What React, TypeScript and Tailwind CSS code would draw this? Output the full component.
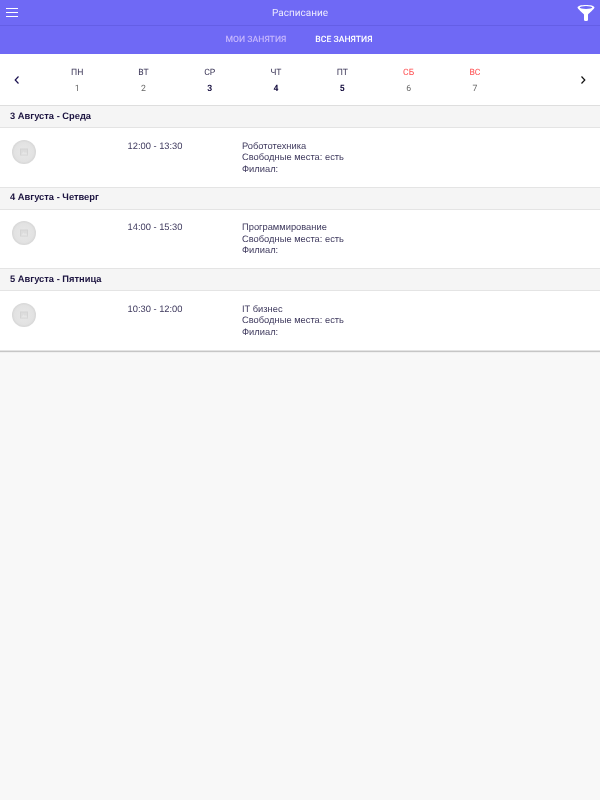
const days = [
  { name: "ПН", num: "1" },
  { name: "ВТ", num: "2" },
  { name: "СР", num: "3", active: true },
  { name: "ЧТ", num: "4", active: true },
  { name: "ПТ", num: "5", active: true },
  { name: "СБ", num: "6", weekend: true },
  { name: "ВС", num: "7", weekend: true },
];

const lessons = [
  { date: "3 Августа - Среда", time: "12:00 - 13:30", title: "Робототехника" },
  { date: "4 Августа - Четверг", time: "14:00 - 15:30", title: "Программирование" },
  { date: "5 Августа - Пятница", time: "10:30 - 12:00", title: "IT бизнес" },
];

const Avatar = () => (
  <div className="w-6 h-6 mt-[11.5px] ml-3 box-content">
    <svg width="24" height="24" viewBox="0 0 24 24">
      <defs>
        <radialGradient id="avatarFill" cx="50%" cy="50%" r="50%">
          <stop offset="0%" stopColor="#e8e8e8" />
          <stop offset="80%" stopColor="#e2e2e2" />
          <stop offset="100%" stopColor="#d6d6d6" />
        </radialGradient>
      </defs>
      <circle cx="12" cy="12" r="12" fill="url(#avatarFill)" />
      <rect x="8.5" y="9" width="7" height="6" fill="#dcdcdc" stroke="#d4d4d4" />
      <path d="M9 14.5l2.5-3 1.5 1.5 1-1 1.5 2.5z" fill="#e6e6e6" />
    </svg>
  </div>
);

const App = () => {
  return (
    <div className="min-h-[800px] flex flex-col bg-[#f8f8f8] font-['Roboto',sans-serif] [text-rendering:geometricPrecision] [will-change:transform]">
      <div className="bg-[#6f69f5]">
        <div className="h-[26px] flex items-center justify-between border-b border-[#645ee6] pl-[6px] pr-[5px]">
          <svg width="12" height="10" viewBox="0 0 12 10" className="mt-px">
            <path d="M0 .5h12M0 4.5h12M0 8.5h12" stroke="#fff" strokeWidth="1.2" />
          </svg>
          <span className="ml-[5px] mt-px text-[10px] text-[#eceafe]">Расписание</span>
          <svg width="18" height="18" viewBox="0 0 18 18">
            <path d="M.5 3.5C.5.2 17.5.2 17.5 3.5c0 1.2-5.2 5.500-6.500 7v5.500c0 1.300-4 1.300-4 0v-5.500c-1.300-1.500-6.500-5.800-6.500-7z" fill="#fff" />
            <ellipse cx="9" cy="3.5" rx="6.3" ry="1.5" fill="#6f69f5" />
          </svg>
        </div>
        <div className="h-7 flex items-center justify-center gap-[29px] pr-[2px] text-[8.67px] font-medium">
          <span className="text-[#c4b5fd]">МОИ ЗАНЯТИЯ</span>
          <span className="text-white">ВСЕ ЗАНЯТИЯ</span>
        </div>
      </div>

      <div className="h-[52px] bg-white flex items-center border-b border-[#dedede] relative">
        <svg width="6" height="10" viewBox="0 0 6 10" className="ml-[14px] shrink-0">
          <path d="M4.5 1.5L1.2 5l3.3 3.5" fill="none" stroke="#1a1050" strokeWidth="1.2" />
        </svg>
        <div className="flex ml-[24px] pt-[3px]">
          {days.map((d) => (
            <div key={d.name} className="w-[66.3px] flex flex-col items-center gap-[5px] text-[8.67px] leading-[11px]">
              <span className={d.weekend ? "text-[#ff4d4f]" : "text-[#3a3556]"}>{d.name}</span>
              <span className={d.active ? "text-[#120a3c] font-bold" : "text-[#666666]"}>{d.num}</span>
            </div>
          ))}
        </div>
        <svg width="6" height="10" viewBox="0 0 6 10" className="ml-auto mr-[14px] shrink-0">
          <path d="M1.5 1.5L4.8 5 1.5 8.5" fill="none" stroke="#111" strokeWidth="1.2" />
        </svg>
      </div>

      <div className="flex flex-col font-['Liberation_Sans',sans-serif] shadow-[0_1px_1px_rgba(0,0,0,0.2)]">
        {lessons.map((l) => (
          <div key={l.date}>
            <div className="h-[22px] flex items-center pl-[10px] bg-[#f5f5f5] border-b border-[#e4e4e4] text-[9.33px] font-bold text-[#1c1440]">
              {l.date}
            </div>
            <div className="h-[59.5px] bg-white flex border-b border-[#e4e4e4] text-[9.33px] leading-[11.5px] text-[#3f3a5e]">
              <div className="w-[127.5px] shrink-0">
                <Avatar />
              </div>
              <div className="w-[114.5px] shrink-0 pt-[12.6px]">{l.time}</div>
              <div className="pt-[12.6px] flex flex-col">
                <span>{l.title}</span>
                <span>Свободные места: есть</span>
                <span>Филиал:</span>
              </div>
            </div>
          </div>
        ))}
      </div>
    </div>
  );
};

export default App;
